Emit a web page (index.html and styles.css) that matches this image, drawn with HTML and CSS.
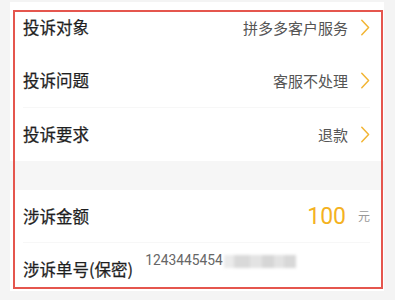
FILE: index.html
```html
<!DOCTYPE html>
<html lang="zh">
<head>
<meta charset="utf-8">
<link rel="stylesheet" href="styles.css">
</head>
<body>
<div class="page">
  <div class="card">
    <div class="row r1">
      <span class="label">投诉对象</span>
      <span class="value">拼多多客户服务</span>
      <svg class="chev" viewBox="0 0 10 17" width="10" height="17"><path d="M1.8 1.2 L8.6 8.5 L1.8 15.8" fill="none" stroke="#f2b534" stroke-width="1.5" stroke-linecap="round" stroke-linejoin="round"/></svg>
    </div>
    <div class="row r2">
      <span class="label">投诉问题</span>
      <span class="value">客服不处理</span>
      <svg class="chev" viewBox="0 0 10 17" width="10" height="17"><path d="M1.8 1.2 L8.6 8.5 L1.8 15.8" fill="none" stroke="#f2b534" stroke-width="1.5" stroke-linecap="round" stroke-linejoin="round"/></svg>
    </div>
    <div class="row r3 line">
      <span class="label">投诉要求</span>
      <span class="value">退款</span>
      <svg class="chev" viewBox="0 0 10 17" width="10" height="17"><path d="M1.8 1.2 L8.6 8.5 L1.8 15.8" fill="none" stroke="#f2b534" stroke-width="1.5" stroke-linecap="round" stroke-linejoin="round"/></svg>
    </div>
    <div class="gap"></div>
    <div class="row r4">
      <span class="label">涉诉金额</span>
      <span class="amount">100</span>
      <span class="unit">元</span>
    </div>
    <div class="row r5 line">
      <span class="label">涉诉单号(保密)</span>
      <span class="order">1243445454</span>
      <span class="blur">
        <i class="b1"></i><i class="b2"></i><i class="b3"></i><i class="b4"></i><i class="b5"></i><i class="b6"></i>
      </span>
    </div>
  </div>
  <div class="mark"></div>
</div>
</body>
</html>
```

FILE: styles.css
```css
html, body {
  margin: 0;
  padding: 0;
  background: #f4f4f4;
}
.page {
  position: relative;
  width: 395px;
  height: 300px;
  overflow: hidden;
  padding: 2px 11px 0 10px;
  box-sizing: border-box;
  font-family: "Noto Sans CJK SC", "Noto Sans", sans-serif;
}
.card {
  background: #fff;
  width: 374px;
  padding: 0 14px 0 13px;
  box-sizing: border-box;
}
.row {
  display: flex;
  align-items: center;
  box-sizing: border-box;
}
.line {
  border-top: 1px solid #f7f7f7;
}
.r1 { height: 51px; }
.r2 { height: 54px; }
.r3 { height: 54px; }
.r4 { height: 52px; }
.r5 { height: 49px; align-items: flex-start; padding-top: 11px; }
.gap {
  height: 29px;
  background: #f6f6f6;
  margin: 0 -14px 0 -13px;
}
.label {
  font-size: 16.5px;
  font-weight: 400;
  color: #1f1f1f;
  white-space: nowrap;
  line-height: 1;
  -webkit-text-stroke: 0.25px #1f1f1f;
}
.r5 .label { margin-top: 7px; }
.value {
  margin-left: auto;
  font-size: 15px;
  color: #555;
  line-height: 1;
}
.chev {
  margin-left: 12px;
  flex: none;
}
.amount {
  margin-left: auto;
  font-family: Roboto, "Noto Sans", sans-serif;
  font-size: 23px;
  color: #f4b21f;
  line-height: 1;
}
.unit {
  margin-left: 12px;
  font-size: 12px;
  color: #999;
  line-height: 1;
}
.order {
  margin-left: 12px;
  font-family: Roboto, "Noto Sans", sans-serif;
  font-size: 13.8px;
  color: #666;
  line-height: 1;
}
.blur {
  display: flex;
  height: 13px;
  margin-top: 1px;
  margin-left: 1px;
  filter: blur(1.5px);
}
.blur i { display: block; height: 13px; }
.b1 { width: 10px; background: #ebebeb; }
.b2 { width: 16px; background: #d9d9d9; }
.b3 { width: 12px; background: #e3e3e3; }
.b4 { width: 12px; background: #d6d6d6; }
.b5 { width: 10px; background: #e2e2e2; }
.b6 { width: 12px; background: #d8d8d8; }
.mark {
  position: absolute;
  left: 13px;
  top: 10px;
  width: 370px;
  height: 279px;
  border: 2px solid #e5564e;
  box-sizing: border-box;
}
```
